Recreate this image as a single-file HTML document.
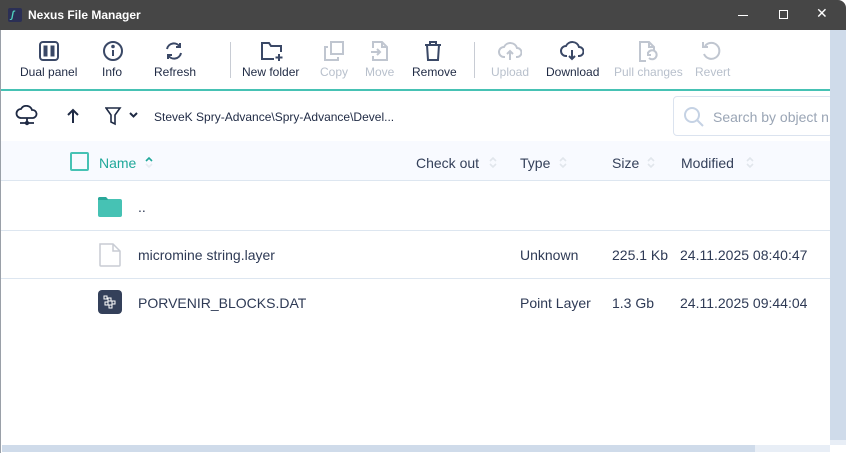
<!DOCTYPE html>
<html><head><meta charset="utf-8"><style>
*{margin:0;padding:0;box-sizing:border-box}
body{width:846px;height:453px;overflow:hidden;background:#fff;font-family:"Liberation Sans","DejaVu Sans",sans-serif;position:relative}
.abs{position:absolute}
.title{left:0;top:0;width:846px;height:30px;background:#464646;border-radius:0 8px 0 0}
.tb{font-size:12px;color:#1f2a44;text-align:center;position:absolute;top:65px;white-space:nowrap}
.dis{color:#b8c0cc}
.hdr{color:#34405a;font-size:14px;position:absolute;top:155px}
.cell{font-size:14px;color:#2e3a55;position:absolute}
.srt{position:absolute;top:155px;width:8px;height:14px}
svg{position:absolute}
</style></head><body>
<div class="abs title"></div>
<div class="abs" style="left:8px;top:8px;width:14px;height:14px;background:#2b2f55;border-radius:2px"></div>
<div class="abs" style="left:11px;top:10px;font-size:10px;color:#4fd1c0;font-weight:bold;font-style:italic">ʃ</div>
<div class="abs" style="left:28px;top:8px;font-size:12px;font-weight:bold;color:#fff">Nexus File Manager</div>
<div class="abs" style="left:738px;top:15px;width:10px;height:1px;background:#fff"></div>
<div class="abs" style="left:779px;top:10px;width:9px;height:9px;border:1px solid #fff"></div>
<div class="abs" style="left:816px;top:5px;color:#fff;font-size:14px">✕</div>

<svg style="left:38px;top:40px" width="22" height="22" viewBox="0 0 22 22" fill="none" stroke="#3a4866" stroke-width="2"><rect x="2" y="2" width="18" height="18" rx="3"/><rect x="5.5" y="5.5" width="4" height="11" fill="#3a4866" stroke="none"/><rect x="12.5" y="5.5" width="4" height="11" fill="#3a4866" stroke="none"/></svg>
<svg style="left:102px;top:40px" width="22" height="22" viewBox="0 0 22 22" fill="none" stroke="#3a4866" stroke-width="2"><circle cx="11" cy="11" r="9"/><path d="M11 10v6"/><circle cx="11" cy="6.5" r="0.8" fill="#3a4866"/></svg>
<svg style="left:163px;top:40px" width="22" height="22" viewBox="0 0 22 22" fill="none" stroke="#3a4866" stroke-width="2"><path d="M4 9a7 7 0 0 1 13-2M18 13a7 7 0 0 1-13 2"/><path d="M17 3v4h-4M5 19v-4h4"/></svg>
<div class="abs" style="left:230px;top:42px;width:1px;height:36px;background:#c8ccd4"></div>
<svg style="left:260px;top:40px" width="24" height="22" viewBox="0 0 24 22" fill="none" stroke="#3a4866" stroke-width="2"><path d="M14 19H2V3h7l2 3h10v6"/><path d="M19 14v7M15.5 17.5h7"/></svg>
<svg style="left:323px;top:40px" width="22" height="22" viewBox="0 0 22 22" fill="none" stroke="#c0c6d0" stroke-width="2"><rect x="8" y="2" width="12" height="12"/><path d="M5 7H2v13h13v-3"/></svg>
<svg style="left:369px;top:40px" width="20" height="22" viewBox="0 0 20 22" fill="none" stroke="#c0c6d0" stroke-width="2"><path d="M4 8V2h9l5 5v13H4v-4M13 2v5h5M2 12h9M8 9l3 3-3 3"/></svg>
<svg style="left:423px;top:40px" width="20" height="22" viewBox="0 0 20 22" fill="none" stroke="#3a4866" stroke-width="2"><path d="M2 5h16M7 5V2h6v3M4 5l1 15h10l1-15"/></svg>
<div class="abs" style="left:474px;top:42px;width:1px;height:36px;background:#c8ccd4"></div>
<svg style="left:498px;top:40px" width="24" height="22" viewBox="0 0 24 22" fill="none" stroke="#c0c6d0" stroke-width="2"><path d="M7 17H6a5 5 0 0 1 0-10 7 7 0 0 1 13 1 4.5 4.5 0 0 1 0 9h-1"/><path d="M12 20v-9M9 14l3-3 3 3"/></svg>
<svg style="left:560px;top:40px" width="24" height="22" viewBox="0 0 24 22" fill="none" stroke="#3a4866" stroke-width="2"><path d="M7 16H6a5 5 0 0 1 0-10 7 7 0 0 1 13 1 4.5 4.5 0 0 1 0 9h-1"/><path d="M12 10v9M9 16l3 3 3-3"/></svg>
<svg style="left:637px;top:40px" width="22" height="24" viewBox="0 0 22 24" fill="none" stroke="#c0c6d0" stroke-width="2"><path d="M9 21H3V2h9l5 5v3M12 2v5h5"/><path d="M11 13a4.5 4.5 0 1 1 1 5M11 12v3h3"/></svg>
<svg style="left:700px;top:40px" width="22" height="22" viewBox="0 0 22 22" fill="none" stroke="#c0c6d0" stroke-width="2"><path d="M5 6a8 8 0 1 1-1 8"/><path d="M3 2v5h5"/></svg>

<div class="tb" style="left:20px">Dual panel</div>
<div class="tb" style="left:102px">Info</div>
<div class="tb" style="left:154px">Refresh</div>
<div class="tb" style="left:242px">New folder</div>
<div class="tb dis" style="left:320px">Copy</div>
<div class="tb dis" style="left:365px">Move</div>
<div class="tb" style="left:412px">Remove</div>
<div class="tb dis" style="left:491px">Upload</div>
<div class="tb" style="left:546px">Download</div>
<div class="tb dis" style="left:614px">Pull changes</div>
<div class="tb dis" style="left:695px">Revert</div>
<div class="abs" style="left:0;top:89px;width:830px;height:2px;background:#46c2b4"></div>

<svg style="left:15px;top:105px" width="24" height="22" viewBox="0 0 24 22" fill="none" stroke="#1f2a44" stroke-width="1.8"><path d="M6 13a4.5 4.5 0 0 1 0-9 6 6 0 0 1 11 1 4 4 0 0 1 1 8z"/><path d="M12 13v5M5 18h14"/><circle cx="12" cy="18" r="1.3" fill="#1f2a44"/></svg>
<svg style="left:66px;top:108px" width="14" height="16" viewBox="0 0 14 16" fill="none" stroke="#1f2a44" stroke-width="2"><path d="M7 15V2M2 7l5-5 5 5"/></svg>
<svg style="left:105px;top:106px" width="36" height="20" viewBox="0 0 36 20" fill="none" stroke="#1f2a44" stroke-width="1.6"><path d="M1 2h14l-5 7v9l-4-2V9z"/><path d="M25 7l3.5 3.5L32 7" stroke-width="2"/></svg>
<div class="abs" style="left:154px;top:110px;font-size:12px;color:#1f2a44">SteveK Spry-Advance\Spry-Advance\Devel...</div>
<div class="abs" style="left:673px;top:96px;width:160px;height:40px;border:1px solid #dbe3ef;border-radius:4px"></div>
<svg style="left:683px;top:106px" width="22" height="22" viewBox="0 0 22 22" fill="none" stroke="#c5d2e4" stroke-width="2"><circle cx="9" cy="9" r="7"/><path d="M14 14l6 6"/></svg>
<div class="abs" style="left:713px;top:109px;font-size:14px;color:#9aa5b5;white-space:nowrap;width:116px;overflow:hidden">Search by object name</div>

<div class="abs" style="left:0;top:141px;width:830px;height:40px;background:#f8faff;border-bottom:1px solid #dde6f0"></div>
<div class="abs" style="left:70px;top:152px;width:19px;height:19px;border:2px solid #46c2b4;border-radius:2px"></div>
<div class="hdr" style="left:99px;color:#20a89a">Name</div>
<svg style="left:144px;top:155px" width="10" height="14" viewBox="0 0 10 14" fill="none" stroke-width="1.6"><path d="M2 6l3-3 3 3" stroke="#20a89a"/><path d="M2 9l3 3 3-3" stroke="#e6ebf1"/></svg>
<div class="hdr" style="left:416px">Check out</div>
<div class="hdr" style="left:520px">Type</div>
<div class="hdr" style="left:612px">Size</div>
<div class="hdr" style="left:681px">Modified</div>
<svg style="left:488px;top:155px" width="10" height="14" viewBox="0 0 10 14" fill="none" stroke="#e1e6ec" stroke-width="1.6"><path d="M2 6l3-3 3 3M2 9l3 3 3-3"/></svg>
<svg style="left:558px;top:155px" width="10" height="14" viewBox="0 0 10 14" fill="none" stroke="#e1e6ec" stroke-width="1.6"><path d="M2 6l3-3 3 3M2 9l3 3 3-3"/></svg>
<svg style="left:646px;top:155px" width="10" height="14" viewBox="0 0 10 14" fill="none" stroke="#e1e6ec" stroke-width="1.6"><path d="M2 6l3-3 3 3M2 9l3 3 3-3"/></svg>
<svg style="left:745px;top:155px" width="10" height="14" viewBox="0 0 10 14" fill="none" stroke="#e1e6ec" stroke-width="1.6"><path d="M2 6l3-3 3 3M2 9l3 3 3-3"/></svg>

<svg style="left:98px;top:197px" width="24" height="20" viewBox="0 0 24 20"><path d="M0 2a2 2 0 0 1 2-2h6l2 2h12a2 2 0 0 1 2 2v14a2 2 0 0 1-2 2H2a2 2 0 0 1-2-2z" fill="#46c2b4"/><path d="M0 2a2 2 0 0 1 2-2h6l2 3H0z" fill="#2aa89a"/></svg>
<div class="cell" style="left:138px;top:199px">..</div>
<div class="abs" style="left:0;top:230px;width:830px;height:1px;background:#dde6f0"></div>
<svg style="left:98px;top:242px" width="24" height="26" viewBox="0 0 24 26" fill="none" stroke="#c8ccd4" stroke-width="1.5"><path d="M2 2h13l7 7v14a1 1 0 0 1-1 1H3a1 1 0 0 1-1-1z"/><path d="M15 2v7h7"/></svg>
<div class="cell" style="left:138px;top:247px">micromine string.layer</div>
<div class="cell" style="left:520px;top:247px">Unknown</div>
<div class="cell" style="left:612px;top:247px">225.1 Kb</div>
<div class="cell" style="left:680px;top:247px">24.11.2025 08:40:47</div>
<div class="abs" style="left:0;top:278px;width:830px;height:1px;background:#dde6f0"></div>
<svg style="left:98px;top:290px" width="24" height="24" viewBox="0 0 24 24"><rect width="24" height="24" rx="4" fill="#34405a"/><g fill="none" stroke="#fff" stroke-width="1"><rect x="6" y="6" width="3" height="3"/><rect x="10" y="8" width="3" height="3"/><rect x="14" y="11" width="3" height="3"/><rect x="7" y="12" width="3" height="3"/><rect x="11" y="15" width="3" height="3"/></g></svg>
<div class="cell" style="left:138px;top:295px">PORVENIR_BLOCKS.DAT</div>
<div class="cell" style="left:520px;top:295px">Point Layer</div>
<div class="cell" style="left:612px;top:295px">1.3 Gb</div>
<div class="cell" style="left:680px;top:295px">24.11.2025 09:44:04</div>

<div class="abs" style="left:830px;top:30px;width:16px;height:410px;background:#cfdbea"></div>
<div class="abs" style="left:830px;top:440px;width:16px;height:5px;background:#e8eef6"></div>
<div class="abs" style="left:2px;top:445px;width:753px;height:7px;background:#cfdbea"></div>
<div class="abs" style="left:755px;top:445px;width:75px;height:7px;background:#e8eef6"></div>
<div class="abs" style="left:0;top:30px;width:1px;height:423px;background:#9aa0a8"></div>
</body></html>
